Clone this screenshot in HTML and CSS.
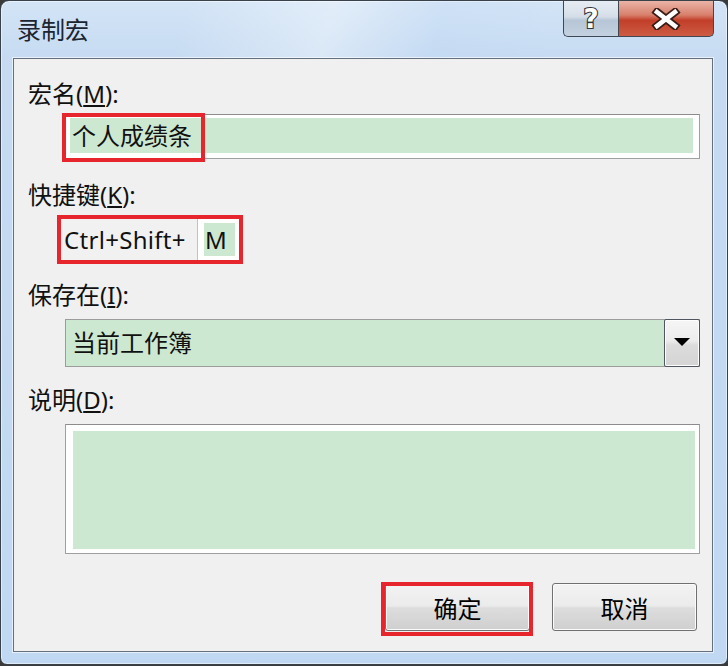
FILE: index.html
```html
<!DOCTYPE html>
<html lang="zh-CN">
<head>
<meta charset="utf-8">
<title>录制宏</title>
<link rel="stylesheet" href="styles.css">
</head>
<body>
<div class="window">
  <div class="titlebar">
    <div class="title">录制宏</div>
    <div class="caption">
      <div class="cap-btn help">
        <svg width="24" height="30" viewBox="0 0 24 30"><text x="12" y="24" text-anchor="middle" class="q">?</text></svg>
      </div>
      <div class="cap-btn close">
        <svg width="30" height="22" viewBox="0 0 30 22">
          <path d="M6 4 L24 18 M24 4 L6 18" class="x-out"/>
          <path d="M6 4 L24 18 M24 4 L6 18" class="x-in"/>
        </svg>
      </div>
    </div>
  </div>
  <div class="panel">
    <div class="label l1">宏名(<u>M</u>):</div>
    <div class="field name">
      <div class="fill">个人成绩条</div>
      <div class="mark"></div>
    </div>
    <div class="label l2">快捷键(<u>K</u>):</div>
    <div class="hotkey">
      <span class="hk-prefix">Ctrl+Shift+</span>
      <span class="hk-box"><span class="hk-key">M</span></span>
    </div>
    <div class="label l3">保存在(<u>I</u>):</div>
    <div class="select">
      <div class="sel-text">当前工作簿</div>
      <div class="sel-btn">
        <svg width="16" height="8" viewBox="0 0 16 8"><polygon points="0,0 16,0 8,8" fill="#000"/></svg>
      </div>
    </div>
    <div class="label l4">说明(<u>D</u>):</div>
    <div class="field desc"><div class="fill"></div></div>
    <div class="actions">
      <button class="btn ok">确定</button>
      <button class="btn">取消</button>
    </div>
  </div>
</div>
</body>
</html>
```
FILE: styles.css
```css
html, body {
  margin: 0;
  padding: 0;
}
body {
  width: 728px;
  height: 666px;
  overflow: hidden;
  background: #3a3a3a;
  font-family: "Noto Sans", "Noto Sans CJK SC", sans-serif;
}
.window {
  box-sizing: border-box;
  width: 728px;
  height: 665px;
  border: 1px solid #39414b;
  border-radius: 9px 9px 7px 7px;
  background: linear-gradient(180deg, #d3e4f6 0, #c6dbf2 57px, #c0d8f2 100%);
  display: flex;
  flex-direction: column;
  overflow: hidden;
  box-shadow: inset 0 0 0 1px rgba(255,255,255,0.5);
}
.titlebar {
  height: 57px;
  flex: none;
  display: flex;
  justify-content: space-between;
  align-items: flex-start;
  padding: 0 13px 0 16px;
  background: linear-gradient(105deg, rgba(255,255,255,0) 25%, rgba(255,255,255,0.35) 45%, rgba(190,215,245,0.2) 60%, rgba(255,255,255,0) 75%);
}
.title {
  margin-top: 13px;
  font-size: 24px;
  line-height: 32px;
  color: #1b2430;
}
.caption {
  display: flex;
  height: 36px;
}
.cap-btn {
  box-sizing: border-box;
  height: 36px;
  border: 1px solid #3f4753;
  border-top: none;
  display: flex;
  align-items: center;
  justify-content: center;
}
.help {
  width: 55px;
  border-right: none;
  border-bottom-left-radius: 5px;
  background: linear-gradient(180deg, #e6ecf3 0, #d5dee8 45%, #b7c6d7 55%, #c3d1e0 100%);
}
.close {
  width: 96px;
  border-bottom-right-radius: 5px;
  background: linear-gradient(180deg, #e9b4a7 0, #d8806c 40%, #c23f29 55%, #cd5b44 100%);
}
.q {
  font-family: "DejaVu Sans", sans-serif;
  font-weight: bold;
  font-size: 26px;
  fill: #fff;
  stroke: #2e3440;
  stroke-width: 2.2px;
  paint-order: stroke;
}
.x-out {
  stroke: #3a1d16;
  stroke-width: 8;
  stroke-linecap: square;
  fill: none;
}
.x-in {
  stroke: #fff;
  stroke-width: 4.5;
  stroke-linecap: square;
  fill: none;
}
.panel {
  box-sizing: border-box;
  height: 594px;
  flex: none;
  margin: 0 14px 0 12px;
  background: #f0f0f0;
  border: 1px solid #65707e;
  box-shadow: 0 0 0 1px rgba(255,255,255,0.6);
  display: flex;
  flex-direction: column;
}
.label {
  margin-left: 14px;
  height: 30px;
  font-size: 24px;
  line-height: 30px;
  color: #111;
}
.label u {
  text-underline-offset: 2px;
}
.l1 { margin-top: 20px; }
.l2 { margin-top: 21px; }
.l3 { margin-top: 16px; }
.l4 { margin-top: 18px; }
.field {
  box-sizing: border-box;
  margin: 0 12px 0 51px;
  border: 1px solid #a0a0a0;
  border-top-color: #8c8c8c;
  background: #fff;
  position: relative;
}
.fill {
  background: #cde8d0;
  height: 100%;
  box-sizing: border-box;
}
.name {
  margin-top: 5px;
  height: 45px;
  padding: 3px 6px 5px 4px;
}
.name .fill {
  padding-left: 2px;
  font-size: 24px;
  line-height: 35px;
  color: #111;
}
.mark {
  position: absolute;
  left: -4px;
  top: -2px;
  width: 143px;
  height: 49px;
  box-sizing: border-box;
  border: 4px solid #e6262c;
}
.hotkey {
  box-sizing: border-box;
  margin: 5px 0 0 43px;
  width: 186px;
  height: 49px;
  border: 4px solid #e6262c;
  display: flex;
  background: #f1f1f1;
}
.hk-prefix {
  padding-left: 3px;
  font-size: 24px;
  line-height: 41px;
  color: #111;
  letter-spacing: 0.3px;
}
.hk-box {
  margin-left: auto;
  box-sizing: border-box;
  width: 42px;
  border-left: 1px solid #c2c2c2;
  background: #fff;
  padding: 4px 4px 4px 6px;
}
.hk-key {
  display: block;
  height: 33px;
  background: #cde8d0;
  font-size: 24px;
  line-height: 33px;
  padding-left: 1px;
  color: #111;
}
.select {
  box-sizing: border-box;
  margin: 9px 12px 0 51px;
  height: 48px;
  border: 1px solid #9c9c9c;
  background: #cde8d0;
  display: flex;
}
.sel-text {
  flex: 1;
  padding-left: 6px;
  font-size: 24px;
  line-height: 46px;
  color: #111;
}
.sel-btn {
  box-sizing: border-box;
  width: 36px;
  margin: -1px -1px -1px 0;
  border: 1px solid #50565f;
  border-radius: 2px;
  background: linear-gradient(180deg, #f6f6f6 0, #ececec 45%, #dcdcdc 55%, #d4d4d4 100%);
  box-shadow: inset 0 0 0 1px #fdfdfd;
  display: flex;
  align-items: center;
  justify-content: center;
  padding-bottom: 2px;
}
.desc {
  margin-top: 9px;
  height: 130px;
  padding: 6px 4px 4px 7px;
}
.actions {
  margin: 29px 15px 0 0;
  height: 48px;
  display: flex;
  justify-content: flex-end;
  gap: 22px;
}
.btn {
  position: relative;
  box-sizing: border-box;
  width: 145px;
  height: 48px;
  padding: 0;
  border: 1px solid #707070;
  border-radius: 3px;
  background: linear-gradient(180deg, #f3f3f3 0, #ebebeb 48%, #dddddd 52%, #cfcfcf 100%);
  box-shadow: inset 0 0 0 1px #fbfbfb;
  font-family: "Noto Sans CJK SC", sans-serif;
  font-size: 24px;
  color: #000;
}
.ok::after {
  content: "";
  position: absolute;
  left: -5px;
  right: -4px;
  top: -2px;
  bottom: -6px;
  border: 4px solid #e6262c;
}
```
